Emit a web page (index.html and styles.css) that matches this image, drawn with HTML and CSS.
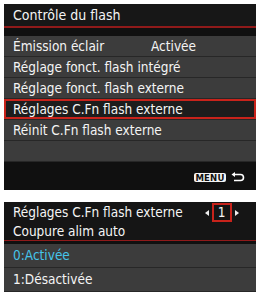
FILE: index.html
```html
<!DOCTYPE html>
<html lang="fr">
<head>
<meta charset="utf-8">
<link rel="stylesheet" href="styles.css">
</head>
<body>
<div class="page">
  <section class="screen s1">
    <div class="hdr">Contrôle du flash</div>
    <div class="rule"></div>
    <div class="gap"></div>
    <div class="list">
      <div class="row two"><span>Émission éclair</span><span>Activée</span></div>
      <div class="row">Réglage fonct. flash intégré</div>
      <div class="row">Réglage fonct. flash externe</div>
      <div class="row sel">Réglages C.Fn flash externe</div>
      <div class="row">Réinit C.Fn flash externe</div>
      <div class="row"></div>
    </div>
    <div class="foot">
      <span class="menu">MENU</span>
      <svg class="ret" width="14" height="10" viewBox="0 0 14 10">
        <path d="M3 2.5 H9.5 A3 3 0 0 1 9.5 8.5 H3" fill="none" stroke="#fff" stroke-width="1.6"/>
        <path d="M0.5 2.5 L4 0 V5 Z" fill="#fff"/>
      </svg>
    </div>
  </section>
  <section class="screen s2">
    <div class="hdr2">
      <div class="line1">
        <span>Réglages C.Fn flash externe</span>
        <span class="pager">
          <span class="tri l"></span>
          <span class="num">1</span>
          <span class="tri r"></span>
        </span>
      </div>
      <div class="line2">Coupure alim auto</div>
    </div>
    <div class="rule"></div>
    <div class="gap2"></div>
    <div class="list2">
      <div class="row2 cur">0:Activée</div>
      <div class="row2">1:Désactivée</div>
    </div>
  </section>
</div>
</body>
</html>
```

FILE: styles.css
```css
html, body {
  margin: 0;
  padding: 0;
  background: #ffffff;
}
body {
  font-family: "DejaVu Sans Condensed", "Liberation Sans Narrow", "Open Sans", sans-serif;
  color: #f4f4f4;
  font-size: 13.5px;
}
.page {
  width: 256px;
  height: 292px;
  overflow: hidden;
  display: flex;
  flex-direction: column;
  gap: 12px;
  padding: 4px 0 0 4px;
  box-sizing: border-box;
}
.screen {
  background: #101010;
  display: flex;
  flex-direction: column;
  flex: none;
}
.s1 { height: 186px; }
.s2 { height: 90px; }

.hdr {
  height: 22px;
  line-height: 22px;
  padding-left: 9px;
  background: #171717;
  font-size: 14px;
}
.rule {
  height: 2px;
  background: #901a1a;
}
.gap { height: 8px; background: #101010; }
.list { background: #3c3c3c; }
.row {
  height: 20px;
  line-height: 20px;
  border-bottom: 1px solid #272727;
  padding-left: 9px;
  white-space: nowrap;
}
.row.two {
  display: grid;
  grid-template-columns: 138px auto;
}
.row.sel {
  background: #1d1d1d;
  box-shadow: inset 0 0 0 2px #c8231b;
}
.foot {
  flex: 1;
  display: flex;
  justify-content: flex-end;
  align-items: center;
  gap: 5px;
  padding-right: 11px;
  padding-top: 2px;
}
.menu {
  background: #f4f4f4;
  color: #111;
  font-family: "DejaVu Sans Condensed", "Liberation Sans Narrow", sans-serif;
  font-weight: bold;
  font-size: 9.5px;
  line-height: 9px;
  height: 9px;
  width: 32px;
  text-align: center;
  border-radius: 2px;
  letter-spacing: 0.2px;
}
.ret { display: block; }

.hdr2 {
  background: #151515;
  padding-top: 1px;
  height: 38px;
  box-sizing: border-box;
}
.line1 {
  height: 19px;
  line-height: 19px;
  padding-left: 9px;
  display: flex;
  align-items: center;
  white-space: nowrap;
}
.line2 {
  height: 19px;
  line-height: 18px;
  padding-left: 9px;
}
.pager {
  margin-left: 22px;
  display: flex;
  align-items: center;
  gap: 3px;
}
.tri {
  width: 0;
  height: 0;
  border-top: 3px solid transparent;
  border-bottom: 3px solid transparent;
}
.tri.l { border-right: 4px solid #eee; }
.tri.r { border-left: 4px solid #eee; }
.num {
  width: 16px;
  height: 15px;
  line-height: 15px;
  text-align: center;
  border: 2px solid #c8231b;
}
.gap2 { height: 5px; }
.list2 { background: #3c3c3c; }
.row2 {
  height: 23px;
  line-height: 23px;
  border-bottom: 1px solid #272727;
  padding-left: 9px;
}
.row2.cur { color: #45c4ea; }
```
